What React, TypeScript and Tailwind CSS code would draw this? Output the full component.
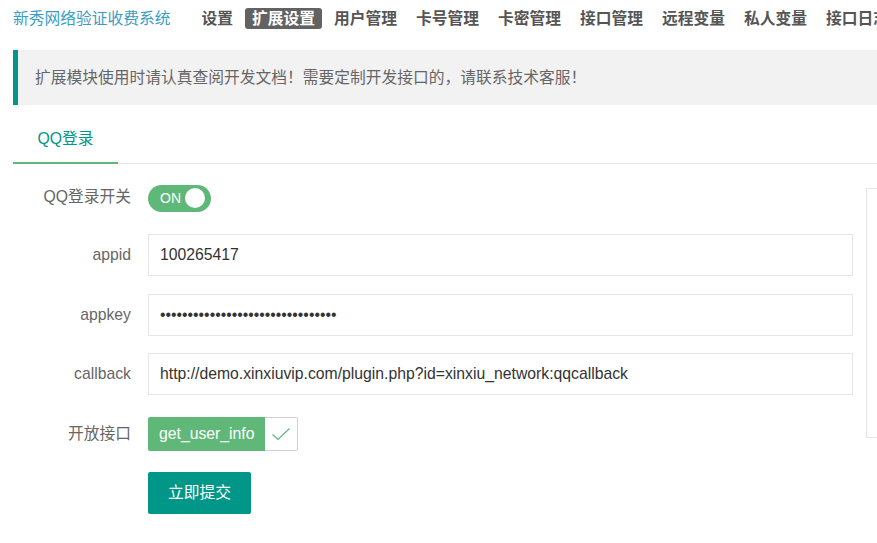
import React from "react";

const font = { fontFamily: '"Liberation Sans", "Noto Sans CJK SC", sans-serif' };

const navItems = ["设置", "扩展设置", "用户管理", "卡号管理", "卡密管理", "接口管理", "远程变量", "私人变量", "接口日志"];

function Label({ children }: { children: React.ReactNode }) {
  return (
    <div className="w-[118px] shrink-0 text-right text-[15.75px] leading-[20px] text-[#666]">{children}</div>
  );
}

function TextInput({ value, type = "text" }: { value: string; type?: string }) {
  return (
    <input
      type={type}
      readOnly
      defaultValue={value}
      className="ml-[17px] h-[42px] w-[706px] border border-[#e6e6e6] bg-white pl-[11px] text-[15.75px] text-[#333] outline-none"
      style={font}
    />
  );
}

export default function App() {
  return (
    <div className="h-[543px] w-[877px] overflow-hidden bg-white" style={font}>
      <div className="w-[1000px]">
        {/* top bar */}
        <div className="flex items-center pl-[13px] pt-[8px]">
          <div className="text-[15.75px] leading-[21px] text-[#3a9cc2]">新秀网络验证收费系统</div>
          <div className="ml-[24px] flex gap-[5px]">
            {navItems.map((n) => (
              <div
                key={n}
                className={
                  n === "扩展设置"
                    ? "h-[21px] whitespace-nowrap rounded-[3px] bg-[#626262] px-[7px] text-[15.75px] font-bold leading-[21px] text-white"
                    : "h-[21px] whitespace-nowrap px-[7px] text-[15.75px] font-bold leading-[21px] text-[#555]"
                }
              >
                {n}
              </div>
            ))}
          </div>
        </div>

        {/* notice */}
        <div className="ml-[13px] mt-[21px] flex h-[55px] items-center border-l-[5px] border-[#009688] bg-[#f2f2f2] pl-[17px] text-[15.75px] text-[#666]">
          扩展模块使用时请认真查阅开发文档！需要定制开发接口的，请联系技术客服！
        </div>

        {/* tabs */}
        <div className="ml-[13px] mt-[13px] flex h-[46px] border-b border-[#e6e6e6]">
          <div className="-mb-px flex h-[46px] w-[105px] items-center justify-center border-b-2 border-[#5FB878] pb-[2px] text-[15.75px] text-[#009688]">
            QQ登录
          </div>
        </div>

        {/* form + side panel */}
        <div className="ml-[13px] flex">
          <div className="flex w-[840px] flex-col pt-[12px]">
            <div className="flex h-[42px] items-center">
              <Label>QQ登录开关</Label>
              <div className="ml-[17px] mt-[2px] flex h-[27px] w-[63px] items-center rounded-full bg-[#5FB878] pl-[12px] pr-[6px]">
                <span className="text-[14px] leading-none text-white">ON</span>
                <span className="ml-auto h-[20px] w-[20px] rounded-full bg-white" />
              </div>
            </div>
            <div className="mt-[16px] flex h-[42px] items-center">
              <Label>appid</Label>
              <TextInput value="100265417" />
            </div>
            <div className="mt-[18px] flex h-[42px] items-center">
              <Label>appkey</Label>
              <TextInput type="password" value="xxxxxxxxxxxxxxxxxxxxxxxxxxxxxxxx" />
            </div>
            <div className="mt-[17px] flex h-[42px] items-center">
              <Label>callback</Label>
              <TextInput value="http://demo.xinxiuvip.com/plugin.php?id=xinxiu_network:qqcallback" />
            </div>
            <div className="mt-[18px] flex h-[42px] items-center">
              <Label>开放接口</Label>
              <div className="ml-[17px] flex h-[34px]">
                <div className="flex items-center rounded-l-[2px] bg-[#5FB878] px-[11px] text-[15.75px] text-white">
                  get_user_info
                </div>
                <div className="flex w-[33px] items-center justify-center rounded-r-[2px] border border-l-0 border-[#d2d2d2] bg-white">
                  <svg width="20" height="14" viewBox="0 0 20 14" fill="none">
                    <path d="M1.5 7.5 L7 12.5 L18.5 1.5" stroke="#5FB878" strokeWidth="1.2" />
                  </svg>
                </div>
              </div>
            </div>
            <div className="mt-[17px] flex h-[42px] items-center">
              <div className="w-[118px] shrink-0" />
              <button className="ml-[17px] h-[42px] w-[103px] rounded-[2px] bg-[#009688] text-[15.75px] text-white">
                立即提交
              </button>
            </div>
          </div>
          <div className="ml-[13px] mt-[24px] h-[250px] w-[200px] border border-[#e6e6e6]" />
        </div>
      </div>
    </div>
  );
}
